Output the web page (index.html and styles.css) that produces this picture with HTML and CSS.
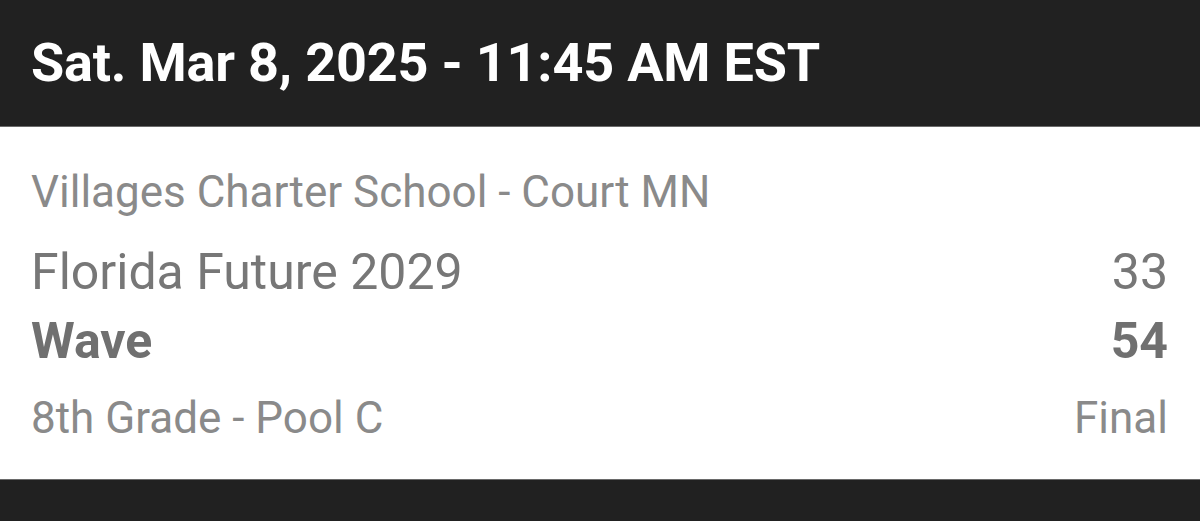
FILE: index.html
```html
<!DOCTYPE html>
<html lang="en">
<head>
    <meta charset="UTF-8">
    <meta name="viewport" content="width=device-width, initial-scale=1.0">
    <title>Game Result</title>
    <link rel="stylesheet" href="styles.css">
</head>
<body>
    <div class="game-header">Sat. Mar 8, 2025 - 11:45 AM EST</div>

    <div class="game-card">
        <div class="venue">Villages Charter School - Court MN</div>
        <div class="team-row">
            <span class="team">Florida Future 2029</span>
            <span class="score">33</span>
        </div>
        <div class="team-row winner">
            <span class="team">Wave</span>
            <span class="score">54</span>
        </div>
        <div class="meta-row">
            <span>8th Grade - Pool C</span>
            <span>Final</span>
        </div>
    </div>

    <div class="next-header"></div>
</body>
</html>
```

FILE: styles.css
```css
* {
    margin: 0;
    padding: 0;
    box-sizing: border-box;
}

body {
    font-family: Roboto, "Noto Sans", Arial, sans-serif;
    background: #ffffff;
    overflow: hidden;
}

.game-header {
    height: 127px;
    line-height: 126px;
    padding: 0 31px;
    background: #212121;
    border-bottom: 1px solid #6a6a6a;
    color: #ffffff;
    font-size: 54px;
    font-weight: 700;
    letter-spacing: -0.2px;
}

.game-card {
    padding: 35px 32px 31px 31px;
}

.venue {
    font-size: 44px;
    line-height: 60px;
    color: #8a8a8a;
    margin-bottom: 16px;
}

.team-row {
    display: flex;
    justify-content: space-between;
    font-size: 50px;
    line-height: 69px;
    color: #777777;
}

.team-row.winner {
    font-weight: 700;
    color: #707070;
}

.meta-row {
    display: flex;
    justify-content: space-between;
    margin-top: 12px;
    font-size: 44px;
    line-height: 60px;
    color: #8a8a8a;
}

.next-header {
    height: 60px;
    background: #212121;
    border-top: 1px solid #6a6a6a;
}
```
